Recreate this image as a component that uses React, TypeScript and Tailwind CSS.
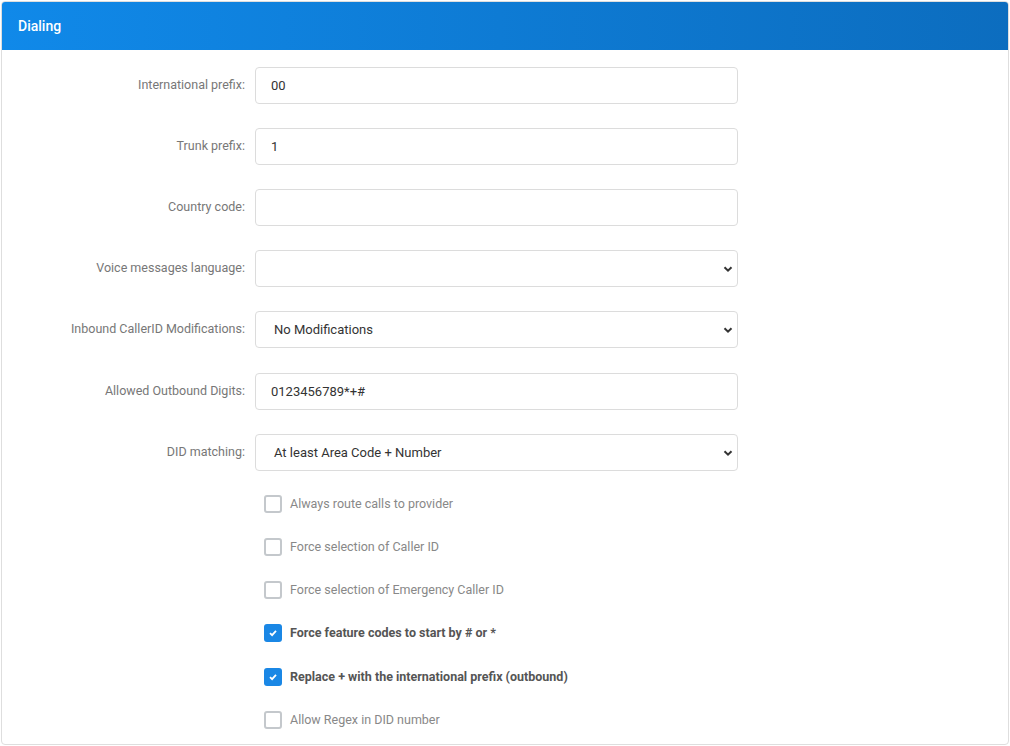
import React from "react";

const Chevron = () => (
  <svg className="absolute right-[4px] top-1/2 -translate-y-1/2" width="10" height="10" viewBox="0 0 10 10">
    <path d="M1.5 3.2 L5 6.7 L8.5 3.2" fill="none" stroke="#333" strokeWidth="2" />
  </svg>
);

function Row({ label, value, select }: { label: string; value: string; select?: boolean }) {
  return (
    <div className="flex items-center h-[37px]">
      <div className="w-[254px] pr-[10px] text-right text-[12.5px] text-[#777]">{label}</div>
      <div className="relative w-[483px] h-[37px] border border-[#dcdcdc] rounded-[4px] bg-white flex items-center text-[13px] text-[#333]" style={{ paddingLeft: select ? 18 : 15 }}>
        {value}
        {select && <Chevron />}
      </div>
    </div>
  );
}

function Check({ label, checked }: { label: string; checked?: boolean }) {
  return (
    <div className="flex items-center h-[18px] pl-[263px]">
      {checked ? (
        <div className="w-[18px] h-[18px] rounded-[3px] bg-[#1a87e5] flex items-center justify-center">
          <svg width="10" height="10" viewBox="0 0 10 10"><path d="M2 5.2 L4.1 7.2 L8 2.9" fill="none" stroke="white" strokeWidth="1.8" /></svg>
        </div>
      ) : (
        <div className="w-[18px] h-[18px] rounded-[3px] border-2 border-[#c4c8cc] bg-white" />
      )}
      <span className={"ml-[8px] text-[12.5px] " + (checked ? "font-bold text-[#555]" : "text-[#888]")}>{label}</span>
    </div>
  );
}

export default function App() {
  return (
    <div className="w-[1010px] h-[746px] bg-white pt-px px-px" style={{ fontFamily: "Roboto, sans-serif" }}>
      <div className="w-[1008px] h-[744px] border border-[#dedede] rounded-[4px] overflow-hidden">
        <div className="h-[48px] flex items-center pl-[16px] text-white text-[14px] font-medium bg-gradient-to-r from-[#1089e9] to-[#0c6dbf]">
          Dialing
        </div>
        <div className="pt-[17px] flex flex-col gap-[24px] -ml-px">
          <Row label="International prefix:" value="00" />
          <Row label="Trunk prefix:" value="1" />
          <Row label="Country code:" value="" />
          <Row label="Voice messages language:" value="" select />
          <Row label="Inbound CallerID Modifications:" value="No Modifications" select />
          <div className="mt-px"><Row label="Allowed Outbound Digits:" value="0123456789*+#" /></div>
          <Row label="DID matching:" value="At least Area Code + Number" select />
        </div>
        <div className="mt-[24px] flex flex-col gap-[25px] -ml-px">
          <Check label="Always route calls to provider" />
          <Check label="Force selection of Caller ID" />
          <Check label="Force selection of Emergency Caller ID" />
          <Check label="Force feature codes to start by # or *" checked />
          <div className="mt-[1px] flex flex-col gap-[25px]">
            <Check label="Replace + with the international prefix (outbound)" checked />
            <Check label="Allow Regex in DID number" />
          </div>
        </div>
      </div>
    </div>
  );
}
